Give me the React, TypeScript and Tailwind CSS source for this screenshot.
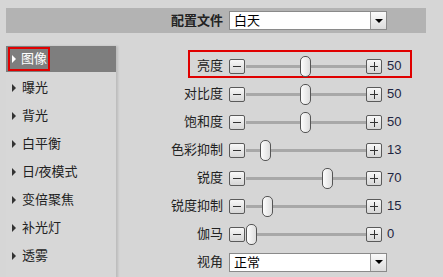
import React from 'react';

interface SliderRow {
  label: string;
  value: number;
}

const MENU = ['图像', '曝光', '背光', '白平衡', '日/夜模式', '变倍聚焦', '补光灯', '透雾'];

const SLIDERS: SliderRow[] = [
  { label: '亮度', value: 50 },
  { label: '对比度', value: 50 },
  { label: '饱和度', value: 50 },
  { label: '色彩抑制', value: 13 },
  { label: '锐度', value: 70 },
  { label: '锐度抑制', value: 15 },
  { label: '伽马', value: 0 },
];

const FONT = "font-['Liberation_Sans','Noto_Sans_CJK_SC',sans-serif]";

function Arrow({ white }: { white?: boolean }) {
  return (
    <span
      className={`inline-block w-0 h-0 border-y-[4px] border-y-transparent border-l-[4px] ${
        white ? 'border-l-white' : 'border-l-[#333]'
      }`}
    />
  );
}

function Select({ text }: { text: string }) {
  return (
    <div className="w-[158px] h-[19px] bg-white border border-[#8a8a8a] flex items-center">
      <span className="flex-1 pl-[4px] text-[13px] leading-none text-black">{text}</span>
      <div className="w-[16px] h-[17px] border-l border-[#9a9a9a] bg-gradient-to-b from-[#fafafa] to-[#dcdcdc] flex items-center justify-center">
        <span className="w-0 h-0 border-x-[4px] border-x-transparent border-t-[4px] border-t-black" />
      </div>
    </div>
  );
}

function StepButton({ plus }: { plus?: boolean }) {
  return (
    <div className="relative w-[16px] h-[15px] shrink-0 rounded-[2px] border border-[#5a5a5a] bg-gradient-to-b from-[#f8f8f8] to-[#d6d6d6]">
      <span className="absolute left-[3px] top-[6px] w-[8px] h-[1px] bg-[#333]" />
      {plus && <span className="absolute left-[7px] top-[2px] w-[1px] h-[9px] bg-[#333]" />}
    </div>
  );
}

function Slider({ label, value }: SliderRow) {
  return (
    <div className="flex items-center h-[28px]">
      <div className="w-[107px] text-right text-[13px] text-[#222]">{label}</div>
      <div className="ml-[6px] flex items-center">
        <StepButton />
        <div className="relative w-[121px] h-[20px]">
          <div className="absolute left-[1px] right-0 top-[9px] h-[3px] bg-[#a8a8a8]" />
          <div
            className="absolute top-0 w-[11px] h-[21px] rounded-[5px] border border-[#555] bg-gradient-to-r from-[#fdfdfd] to-[#dedede]"
            style={{ left: 1 + (value / 100) * 108 }}
          />
        </div>
        <StepButton plus />
        <span className="ml-[5px] text-[13px] text-[#1e2540]">{value}</span>
      </div>
    </div>
  );
}

export default function App() {
  return (
    <div className={`w-[443px] h-[277px] overflow-hidden bg-[#d6d6d6] pt-[8px] pl-[6px] ${FONT}`}>
      <div className="w-[420px] h-[25px] bg-[#b3b3b3] flex items-center">
        <div className="w-[217px] text-right text-[13px] font-bold text-[#222]">配置文件</div>
        <div className="ml-[6px]">
          <Select text="白天" />
        </div>
      </div>

      <div className="flex mt-[13px]">
        <div className="w-[110px] h-[240px] shadow-[2px_0_2px_rgba(0,0,0,0.12)] bg-[#d7d7d7]">
          {MENU.map((item, i) =>
            i === 0 ? (
              <div key={item} className="h-[26px] mb-[2px] bg-[#7e7e7e] flex items-center pl-[2px]">
                <div className="h-[24px] w-[42px] border-2 border-[#e00000] flex items-center gap-[5px] pl-[2px]">
                  <Arrow white />
                  <span className="text-[13px] text-white">{item}</span>
                </div>
              </div>
            ) : (
              <div key={item} className="h-[28px] flex items-center gap-[6px] pl-[6px]">
                <Arrow />
                <span className="text-[13px] text-[#222]">{item}</span>
              </div>
            )
          )}
        </div>

        <div className="pt-[6px]">
          {SLIDERS.map((s, i) => (
            <div key={s.label} className="relative">
              {i === 0 && (
                <div className="absolute left-[72px] top-[-2px] w-[224px] h-[28px] border-2 border-[#e00000]" />
              )}
              <Slider {...s} />
            </div>
          ))}
          <div className="flex items-center h-[28px]">
            <div className="w-[107px] text-right text-[13px] text-[#222]">视角</div>
            <div className="ml-[6px]">
              <Select text="正常" />
            </div>
          </div>
        </div>
      </div>
    </div>
  );
}
